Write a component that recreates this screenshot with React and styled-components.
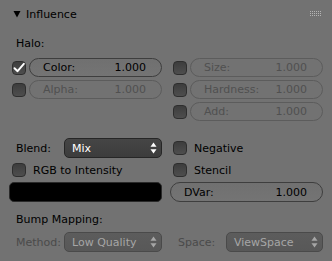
import React from "react";
import styled, { createGlobalStyle } from "styled-components";

const Global = createGlobalStyle`
  html, body { margin: 0; padding: 0; background: #727272; }
  body { font-family: "DejaVu Sans", "Liberation Sans", sans-serif; font-size: 11px; color: #000; }
`;

const Panel = styled.div`
  width: 332px;
  height: 261px;
  overflow: hidden;
  background: #727272;
  box-sizing: border-box;
`;

const Header = styled.div`
  height: 28px;
  display: flex;
  align-items: center;
  padding: 0 11px 0 13px;
  gap: 5px;
  font-size: 11px;
`;

const HeaderTitle = styled.span`
  flex: 1;
  color: #000;
  padding-top: 1px;
`;

const Body = styled.div`
  padding: 0 9px;
  display: flex;
  flex-direction: column;
`;

const Label = styled.div`
  height: 20px;
  display: flex;
  align-items: center;
  padding-left: 7px;
  margin-top: ${(p) => p.$mt || 0}px;
  color: ${(p) => (p.$disabled ? "#4a4a4a" : "#000")};
`;

const Columns = styled.div`
  display: grid;
  grid-template-columns: 153px 153px;
  column-gap: 8px;
  margin-top: ${(p) => p.$mt || 0}px;
  align-items: start;
`;

const Column = styled.div`
  display: flex;
  flex-direction: column;
  gap: ${(p) => p.$gap || 3}px;
`;

const Row = styled.div`
  display: flex;
  align-items: center;
  height: ${(p) => p.$h || 19}px;
  padding-left: ${(p) => p.$pl ?? 3}px;
  gap: 3px;
`;

const Box = styled.div`
  width: 14px;
  height: 14px;
  flex: none;
  box-sizing: border-box;
  border-radius: 4px;
  border: 1px solid #2e2e2e;
  background: linear-gradient(#3d3d3d, #4e4e4e);
  display: flex;
  align-items: center;
  justify-content: center;
`;

const CheckText = styled.span`
  margin-left: 4px;
  color: #000;
`;

const Slider = styled.div`
  flex: 1;
  height: ${(p) => p.$h || 19}px;
  box-sizing: border-box;
  border-radius: 10px;
  border: 1px solid ${(p) => (p.$disabled ? "#5c5c5c" : "#3e3e3e")};
  background: ${(p) => (p.$disabled ? "#727272" : "linear-gradient(#707070, #747474)")};
  display: flex;
  align-items: center;
  justify-content: space-between;
  padding: 0 15px 0 13px;
  color: ${(p) => (p.$disabled ? "#505050" : "#000")};
`;

const Menu = styled.div`
  flex: 1;
  height: 20px;
  box-sizing: border-box;
  border-radius: 5px;
  border: 1px solid ${(p) => (p.$disabled ? "#4a4a4a" : "#262626")};
  background: ${(p) =>
    p.$disabled ? "linear-gradient(#5c5c5c, #585858)" : "linear-gradient(#454545, #3c3c3c)"};
  color: ${(p) => (p.$disabled ? "#a6a6a6" : "#fff")};
  display: flex;
  align-items: center;
  justify-content: space-between;
  padding: 0 4px 0 7px;
`;

const InlineLabel = styled.span`
  width: ${(p) => p.$w}px;
  flex: none;
  padding-left: ${(p) => p.$pl || 0}px;
  box-sizing: border-box;
  color: ${(p) => (p.$disabled ? "#4a4a4a" : "#000")};
`;

const Swatch = styled.div`
  height: 20px;
  box-sizing: border-box;
  border-radius: 5px;
  border: 1px solid #2a2a2a;
  background: #000;
`;

const Check = ({ checked }) => (
  <Box>
    {checked && (
      <svg width="12" height="12" viewBox="0 0 12 12">
        <path d="M1.5 6.2 L4.6 9.2 L10.8 1.8" stroke="#fff" strokeWidth="1.9" fill="none" strokeLinejoin="round" strokeLinecap="round" />
      </svg>
    )}
  </Box>
);

const Arrows = ({ color }) => (
  <svg width="7" height="12" viewBox="0 0 7 12">
    <path d="M3.5 0.5 L6.5 4.8 L0.5 4.8 Z" fill={color} />
    <path d="M3.5 11.5 L6.5 7.2 L0.5 7.2 Z" fill={color} />
  </svg>
);

const NumRow = ({ label, value, checked, disabled }) => (
  <Row>
    <Check checked={checked} />
    <Slider $disabled={disabled}>
      <span>{label}</span>
      <span>{value}</span>
    </Slider>
  </Row>
);

const CheckRow = ({ label }) => (
  <Row $h={20}>
    <Check />
    <CheckText>{label}</CheckText>
  </Row>
);

export default function App() {
  return (
    <Panel>
      <Global />
      <Header>
        <svg width="8" height="8" viewBox="0 0 8 8">
          <path d="M0.5 1 L7.5 1 L4 7.5 Z" fill="#000" />
        </svg>
        <HeaderTitle>Influence</HeaderTitle>
        <svg width="11" height="6" viewBox="0 0 11 6">
          {[0, 2, 4].map((y) =>
            [0, 2, 4, 6, 8, 10].map((x) => (
              <rect key={x + "-" + y} x={x} y={y} width="1" height="1" fill="#b4b4b4" />
            ))
          )}
        </svg>
      </Header>
      <Body>
        <Label $mt={5}>Halo:</Label>
        <Columns $mt={5}>
          <Column>
            <NumRow label="Color:" value="1.000" checked />
            <NumRow label="Alpha:" value="1.000" disabled />
          </Column>
          <Column>
            <NumRow label="Size:" value="1.000" disabled />
            <NumRow label="Hardness:" value="1.000" disabled />
            <NumRow label="Add:" value="1.000" disabled />
          </Column>
        </Columns>
        <Columns $mt={17}>
          <Column $gap={2}>
            <Row $h={20} $pl={0}>
              <InlineLabel $w={52} $pl={7}>Blend:</InlineLabel>
              <Menu>
                <span>Mix</span>
                <Arrows color="#fff" />
              </Menu>
            </Row>
            <CheckRow label="RGB to Intensity" />
            <Swatch />
          </Column>
          <Column $gap={2}>
            <CheckRow label="Negative" />
            <CheckRow label="Stencil" />
            <Row $h={20} $pl={0}>
              <Slider $h={20}>
                <span>DVar:</span>
                <span>1.000</span>
              </Slider>
            </Row>
          </Column>
        </Columns>
        <Label $mt={7}>Bump Mapping:</Label>
        <Columns $mt={3}>
          <Row $h={20} $pl={0}>
            <InlineLabel $w={52} $pl={7} $disabled>Method:</InlineLabel>
            <Menu $disabled>
              <span>Low Quality</span>
              <Arrows color="#a6a6a6" />
            </Menu>
          </Row>
          <Row $h={20} $pl={0}>
            <InlineLabel $w={53} $pl={8} $disabled>Space:</InlineLabel>
            <Menu $disabled>
              <span>ViewSpace</span>
              <Arrows color="#a6a6a6" />
            </Menu>
          </Row>
        </Columns>
      </Body>
    </Panel>
  );
}
